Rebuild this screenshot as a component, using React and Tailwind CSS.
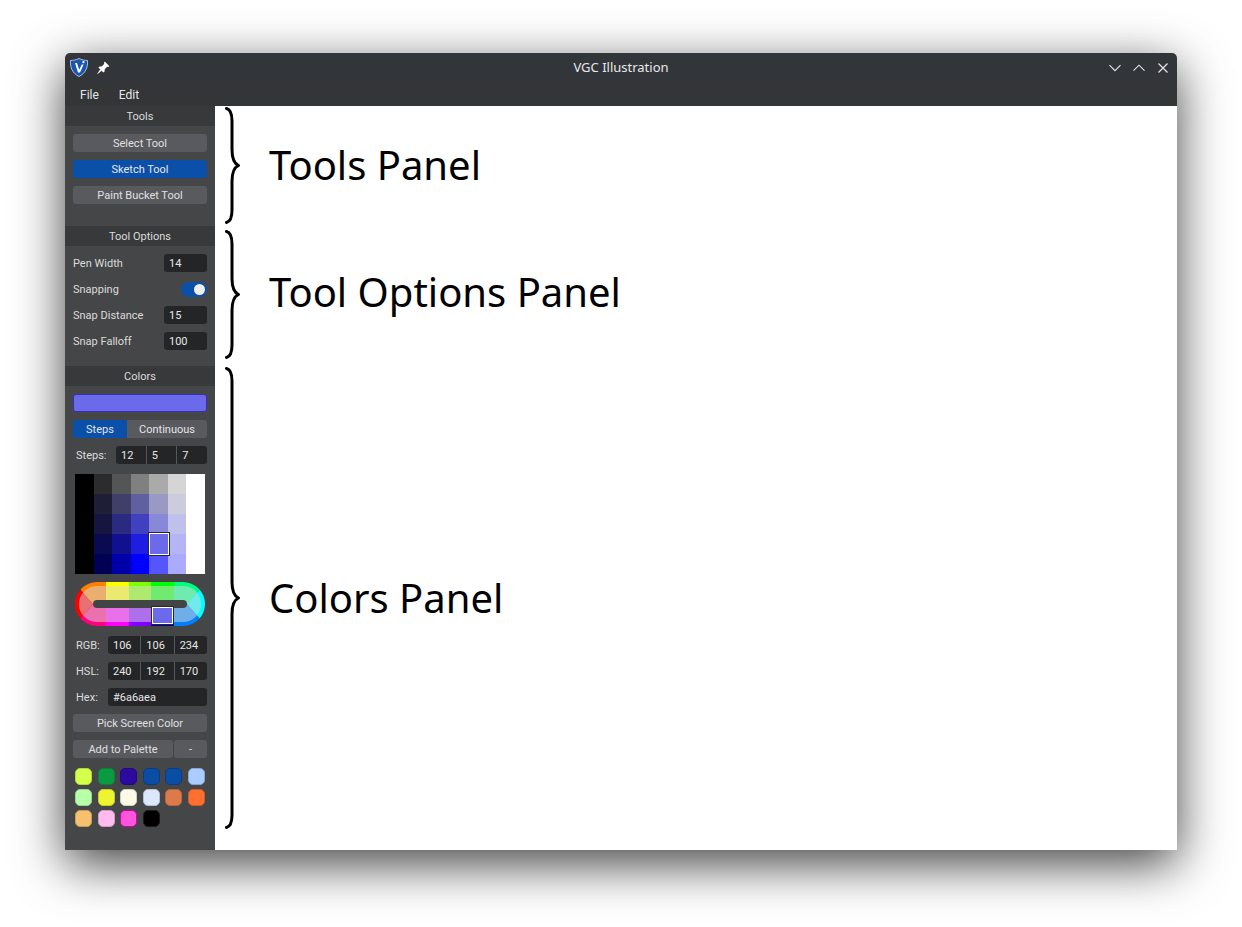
import React from 'react';

const sans = "font-['Roboto',sans-serif]";

const gridColors = [
    ['#000000', '#2c2c2c', '#555555', '#808080', '#aaaaaa', '#d5d5d5', '#ffffff'],
    ['#000000', '#1e1e37', '#3f3f69', '#6060a0', '#9999c4', '#ccccdf', '#ffffff'],
    ['#000000', '#15153f', '#2a2a80', '#4040c0', '#8888d8', '#c0c0ea', '#ffffff'],
    ['#000000', '#0a0a50', '#111190', '#1e1ee0', '#6a6aea', '#b5b5f5', '#ffffff'],
    ['#000000', '#000055', '#0000aa', '#0000ff', '#5555ff', '#aaaaff', '#ffffff'],
];

const swatches = [
    ['#d4ff4a', '#b2d63c'], ['#0a9b42', '#0d8039'], ['#2c0aa0', '#230880'], ['#0a4da5', '#083d85'], ['#0a4da5', '#083d85'], ['#aaccff', '#8aa6d0'],
    ['#b8ffaa', '#98d48c'], ['#eef530', '#c4ca28'], ['#fbfbe8', '#d0d0c0'], ['#dde8ff', '#b6bfd2'], ['#dd7a4a', '#b5643c'], ['#ff7030', '#d05a26'],
    ['#f5c070', '#c99c5a'], ['#ffbbee', '#d29ac4'], ['#ff55dd', '#d000a8'], ['#000000', '#1a1a1a'],
];

const wheelSegments = [
    { pts: '18,22 0,1 0,43', ring: '#ff0000', inner: '#e87070' },
    { pts: '18,22 0,1 0,0 31,0 31,22', ring: '#ff8000', inner: '#eaae70' },
    { pts: '31,0 54,0 54,22 31,22', ring: '#ffff00', inner: '#eaea70' },
    { pts: '54,0 76,0 76,22 54,22', ring: '#80ff00', inner: '#aeea70' },
    { pts: '76,0 99,0 99,22 76,22', ring: '#00ff00', inner: '#70ea70' },
    { pts: '99,0 130,0 130,1 112,22 99,22', ring: '#00ff80', inner: '#70eaae' },
    { pts: '112,22 130,1 130,43', ring: '#00ffff', inner: '#70eaea' },
    { pts: '99,44 130,44 130,43 112,22 99,22', ring: '#0080ff', inner: '#70aeea' },
    { pts: '76,44 99,44 99,22 76,22', ring: '#0000aa', inner: '#6a6aea' },
    { pts: '54,44 76,44 76,22 54,22', ring: '#8000ff', inner: '#ae70ea' },
    { pts: '31,44 54,44 54,22 31,22', ring: '#ff00ff', inner: '#ea70ea' },
    { pts: '18,22 0,43 0,44 31,44 31,22', ring: '#ff0080', inner: '#ea70ae' },
];

const PanelHeader = ({ children }) => (
    <div className="h-5 pt-[2px] bg-[#38393b] flex items-center justify-center text-[11px] text-[#dcdcdc]">{children}</div>
);

const Button = ({ children, active, className = '' }) => (
    <div className={`h-[18px] pt-[2px] rounded-[3px] flex items-center justify-center text-[11px] ${active ? 'bg-[#0a4fa8] text-[#e8e8e8]' : 'bg-[#585a5e] text-[#e0e0e0]'} ${className}`}>
        {children}
    </div>
);

const NumberRow = ({ label, value }) => (
    <div className="h-[18px] flex items-center justify-between text-[11px] text-[#dcdcdc]">
        <span className="pt-[2px]">{label}</span>
        <div className="w-[43px] h-[18px] pt-[2px] bg-[#232527] rounded-[3px] flex items-center px-[5px] text-[#e8e8e8]">{value}</div>
    </div>
);

const MultiInput = ({ label, values, inputWidth }) => (
    <div className="h-[18px] flex items-center justify-between text-[11px] text-[#dcdcdc]">
        <span className="pl-[3px] pt-[2px]">{label}</span>
        <div className={`${inputWidth} h-[18px] bg-[#232527] rounded-[3px] flex divide-x divide-[#55575a] text-[#e8e8e8]`}>
            {values.map((v, i) => (
                <div key={i} className="flex-1 flex items-center pl-[5px] pt-[2px]">{v}</div>
            ))}
        </div>
    </div>
);

const Brace = ({ height }) => {
    const mid = height / 2;
    const d = `M1.5 1.5 C5.5 2.5 7 6 7 14 L7 ${mid - 16} C7 ${mid - 7} 9 ${mid - 2} 13.5 ${mid} C9 ${mid + 2} 7 ${mid + 7} 7 ${mid + 16} L7 ${height - 14} C7 ${height - 6} 5.5 ${height - 2.5} 1.5 ${height - 1.5}`;
    return (
        <svg width="16" height={height} viewBox={`0 0 16 ${height}`} className="shrink-0 ml-[10px]" fill="none" stroke="#000" strokeWidth="3" strokeLinecap="round" strokeLinejoin="round">
            <path d={d} />
        </svg>
    );
};

const Annotation = ({ height, label, className = '', labelClass = '' }) => (
    <div className={`flex items-center ${className}`}>
        <Brace height={height} />
        <span className={`ml-[28px] text-[40px] leading-[54px] text-black font-['Noto_Sans',sans-serif] ${labelClass}`}>{label}</span>
    </div>
);

const ColorWheel = () => (
    <svg width="130" height="44" viewBox="0 0 130 44" className="block mx-auto">
        <defs>
            <clipPath id="wheelOuter"><rect x="0" y="0" width="130" height="44" rx="22" /></clipPath>
            <clipPath id="wheelInner"><rect x="4" y="4" width="122" height="36" rx="18" /></clipPath>
        </defs>
        <g clipPath="url(#wheelOuter)">
            {wheelSegments.map((s) => <polygon key={s.ring} points={s.pts} fill={s.ring} />)}
        </g>
        <g clipPath="url(#wheelInner)">
            {wheelSegments.map((s) => <polygon key={s.inner} points={s.pts} fill={s.inner} />)}
        </g>
        <rect x="18" y="18" width="94" height="8" rx="4" fill="#434445" />
        <rect x="76.5" y="24.5" width="22" height="18" fill="none" stroke="#26272a" strokeWidth="1" />
        <rect x="77.5" y="25.5" width="20" height="16" fill="#6a6aea" stroke="#ffffff" strokeWidth="1" />
    </svg>
);

const Logo = () => (
    <svg width="18" height="19" viewBox="0 0 18 19">
        <path d="M9 .5 C12 2 15 2.5 17.5 2.5 C18 9 16 15 9 18.5 C2 15 0 9 .5 2.5 C3 2.5 6 2 9 .5 Z" fill="#1a56b0" stroke="#a9bfdf" strokeWidth="1" />
        <path d="M5 5 L7 5 L9.2 11.8 L11.8 6.5 L13.6 6.5 L10 14.6 L8 14.6 Z" fill="#ffffff" />
        <circle cx="13.4" cy="4.2" r="1.1" fill="#ffffff" />
    </svg>
);

const PinIcon = () => (
    <svg width="14" height="14" viewBox="0 0 14 14" fill="#ffffff">
        <path d="M8.8 .6 L13.4 5.2 L12.2 6 L11 5.8 L8.6 8.4 L8.6 10.6 L7.4 11.6 L2.4 6.6 L3.4 5.4 L5.6 5.4 L8.2 3 L8 1.8 Z" />
        <path d="M4.2 8.2 L5.8 9.8 L.8 13.4 Z" />
    </svg>
);

const WindowButtons = () => (
    <div className="flex items-center gap-[12px] pr-[8px]">
        <svg width="12" height="12" viewBox="0 0 12 12" fill="none" stroke="#e6e6e6" strokeWidth="1.1"><path d="M.5 3.2 L6 8.7 L11.5 3.2" /></svg>
        <svg width="12" height="12" viewBox="0 0 12 12" fill="none" stroke="#e6e6e6" strokeWidth="1.1"><path d="M.5 8.7 L6 3.2 L11.5 8.7" /></svg>
        <svg width="12" height="12" viewBox="0 0 12 12" fill="none" stroke="#e6e6e6" strokeWidth="1.2"><path d="M1.5 1.5 L10.5 10.5 M10.5 1.5 L1.5 10.5" /></svg>
    </div>
);

export default function App() {
    return (
        <div className={`w-[1242px] h-[927px] bg-white overflow-hidden pt-[53px] pl-[65px] ${sans}`}>
            <div className="w-[1112px] h-[797px] flex flex-col rounded-t-[5px] shadow-[0_14px_50px_rgba(0,0,0,0.75)]">
                {/* Title bar */}
                <div className="h-[29px] bg-[#32363a] rounded-t-[5px] flex items-center justify-between relative">
                    <div className="flex items-center pl-[5px] gap-[8px]">
                        <Logo />
                        <PinIcon />
                    </div>
                    <span className="absolute inset-x-0 text-center text-[13px] text-[#e8e8e8] font-['Noto_Sans',sans-serif]">VGC Illustration</span>
                    <WindowButtons />
                </div>

                {/* Menu bar */}
                <div className="h-6 pt-[2px] bg-[#333537] flex items-center pl-[15px] gap-[20px] text-[12px] text-[#e6e6e6]">
                    <span>File</span>
                    <span>Edit</span>
                </div>

                <div className="flex flex-1 min-h-0">
                    {/* Sidebar */}
                    <div className="w-[150px] bg-[#454647] flex flex-col shrink-0">
                        <div className="h-[120px]">
                            <PanelHeader>Tools</PanelHeader>
                            <div className="px-2 pt-2 flex flex-col gap-2">
                                <Button>Select Tool</Button>
                                <Button active>Sketch Tool</Button>
                                <Button>Paint Bucket Tool</Button>
                            </div>
                        </div>

                        <div className="h-[140px]">
                            <PanelHeader>Tool Options</PanelHeader>
                            <div className="px-2 pt-2 flex flex-col gap-2">
                                <NumberRow label="Pen Width" value="14" />
                                <div className="h-[18px] flex items-center justify-between text-[11px] text-[#dcdcdc]">
                                    <span className="pt-[2px]">Snapping</span>
                                    <div className="w-[26px] h-[15px] rounded-full bg-[#0a4fa8] flex items-center justify-end pr-[2px]">
                                        <div className="w-[11px] h-[11px] rounded-full bg-[#eeeeee]" />
                                    </div>
                                </div>
                                <NumberRow label="Snap Distance" value="15" />
                                <NumberRow label="Snap Falloff" value="100" />
                            </div>
                        </div>

                        <div className="flex-1">
                            <PanelHeader>Colors</PanelHeader>
                            <div className="px-2 pt-2 flex flex-col">
                                <div className="h-[18px] rounded-[3px] bg-[#6a6aea] border border-[#3a30b8]" />
                                <div className="h-[18px] mt-2 flex text-[11px] text-[#e4e4e4]">
                                    <div className="w-[54px] pt-[2px] bg-[#0a4fa8] rounded-l-[3px] flex items-center justify-center">Steps</div>
                                    <div className="flex-1 pt-[2px] bg-[#585a5e] rounded-r-[3px] flex items-center justify-center">Continuous</div>
                                </div>
                                <div className="mt-2">
                                    <MultiInput label="Steps:" inputWidth="w-[91px]" values={['12', '5', '7']} />
                                </div>

                                <div className="mt-[10px] mx-[2px] grid grid-cols-7">
                                    {gridColors.flatMap((row, r) => row.map((c, i) => (
                                        <div key={`${r}-${i}`} className="h-5 relative" style={{ backgroundColor: c }}>
                                            {r === 3 && i === 4 && (
                                                <div className="absolute z-10 -left-[0.5px] -right-[1px] -top-[1px] -bottom-[1px] bg-[#6a6aea] border border-white ring-1 ring-[#26272a]" />
                                            )}
                                        </div>
                                    )))}
                                </div>

                                <div className="mt-2">
                                    <ColorWheel />
                                </div>

                                <div className="mt-[10px] flex flex-col gap-2">
                                    <MultiInput label="RGB:" inputWidth="w-[99px]" values={['106', '106', '234']} />
                                    <MultiInput label="HSL:" inputWidth="w-[99px]" values={['240', '192', '170']} />
                                    <div className="h-[18px] flex items-center justify-between text-[11px] text-[#dcdcdc]">
                                        <span className="pl-[3px] pt-[2px]">Hex:</span>
                                        <div className="w-[99px] h-[18px] pt-[2px] bg-[#232527] rounded-[3px] flex items-center pl-[5px] text-[#e8e8e8]">#6a6aea</div>
                                    </div>
                                    <Button>Pick Screen Color</Button>
                                    <div className="flex gap-px">
                                        <Button className="w-[100px]">Add to Palette</Button>
                                        <Button className="flex-1">-</Button>
                                    </div>
                                </div>

                                <div className="mt-[10px] mx-[2px] grid grid-cols-[repeat(6,17px)] gap-x-[5.6px] gap-y-1">
                                    {swatches.map(([bg, border], i) => (
                                        <div key={i} className="h-[17px] rounded-[5px] border" style={{ backgroundColor: bg, borderColor: border }} />
                                    ))}
                                </div>
                            </div>
                        </div>
                    </div>

                    {/* Annotated canvas */}
                    <div className="flex-1 bg-white flex flex-col pt-[1px]">
                        <Annotation height={117} label="Tools Panel" labelClass="mb-[2px]" />
                        <Annotation height={129} label="Tool Options Panel" className="mt-[6px]" labelClass="mb-[6px]" />
                        <Annotation height={462} label="Colors Panel" className="mt-[8px]" />
                    </div>
                </div>
            </div>
        </div>
    );
}
